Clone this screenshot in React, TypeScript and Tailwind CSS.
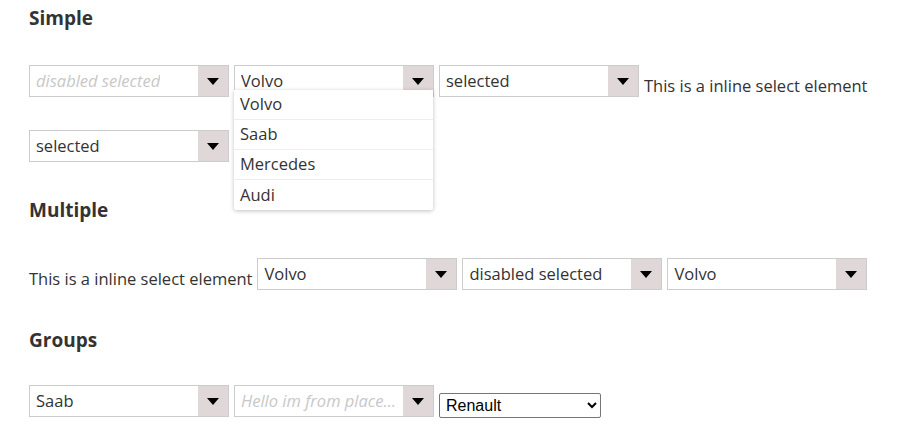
import React from "react";

const font = { fontFamily: '"Open Sans", "Noto Sans", sans-serif' };

function Arrow() {
  return (
    <div className="w-[30px] shrink-0 bg-[#e0d8d8] flex items-center justify-center">
      <span className="block w-0 h-0 border-l-[6px] border-r-[6px] border-t-[7px] border-l-transparent border-r-transparent border-t-black" />
    </div>
  );
}

type SelectProps = {
  label: string;
  muted?: boolean;
  children?: React.ReactNode;
};

function FakeSelect({ label, muted, children }: SelectProps) {
  return (
    <div className="relative w-[200px] h-[32px] shrink-0">
      <div className="flex h-full border border-[#cccccc] bg-white">
        <div
          className={
            "flex-1 min-w-0 pl-[6px] pr-[4px] flex items-center text-[16.5px] " +
            (muted ? "italic text-[#c8c8c8]" : "text-[#333333]")
          }
        >
          <span className="truncate">{label}</span>
        </div>
        <Arrow />
      </div>
      {children}
    </div>
  );
}

function Menu({ items }: { items: string[] }) {
  return (
    <ul className="absolute left-0 top-[25px] w-[199px] bg-white shadow-[0_1px_4px_rgba(0,0,0,0.25)] rounded-b-[2px] z-10">
      {items.map((it, i) => (
        <li
          key={it}
          className={
            "h-[30px] px-[6px] flex items-center text-[16.5px] text-[#333333] " +
            (i < items.length - 1 ? "border-b border-[#eeeeee]" : "")
          }
        >
          {it}
        </li>
      ))}
    </ul>
  );
}

function Heading({ children }: { children: React.ReactNode }) {
  return <h2 className="text-[19px] font-bold text-[#333333] leading-[26px]">{children}</h2>;
}

export default function App() {
  return (
    <div className="bg-white w-[902px] h-[429px] px-[29px] pt-[5px] text-[#333333]" style={font}>
      <Heading>Simple</Heading>
      <div className="mt-[34px] flex items-end gap-[5px]">
        <FakeSelect label="disabled selected" muted />
        <FakeSelect label="Volvo">
          <Menu items={["Volvo", "Saab", "Mercedes", "Audi"]} />
        </FakeSelect>
        <FakeSelect label="selected" />
        <span className="text-[16.5px] leading-[22px] whitespace-nowrap">This is a inline select element</span>
      </div>
      <div className="mt-[33px] flex">
        <FakeSelect label="selected" />
      </div>

      <div className="mt-[35px]">
        <Heading>Multiple</Heading>
      </div>
      <div className="mt-[35px] flex items-end gap-[5px]">
        <span className="text-[16.5px] leading-[22px] whitespace-nowrap">This is a inline select element</span>
        <FakeSelect label="Volvo" />
        <FakeSelect label="disabled selected" />
        <FakeSelect label="Volvo" />
      </div>

      <div className="mt-[37px]">
        <Heading>Groups</Heading>
      </div>
      <div className="mt-[32px] flex items-end gap-[5px]">
        <FakeSelect label="Saab" />
        <FakeSelect label="Hello im from placeholder" muted />
        <select
          defaultValue="Renault"
          className="w-[162px] h-[25px] border border-[#767676] rounded-[2px] bg-white text-black text-[16px] px-[2px] mb-[-1px]"
          style={{ fontFamily: '"Liberation Sans", Arial, sans-serif', appearance: "auto" }}
        >
          <optgroup label="Swedish Cars">
            <option>Volvo</option>
            <option>Saab</option>
          </optgroup>
          <optgroup label="French Cars">
            <option>Renault</option>
            <option>Peugeot</option>
          </optgroup>
        </select>
      </div>
    </div>
  );
}
